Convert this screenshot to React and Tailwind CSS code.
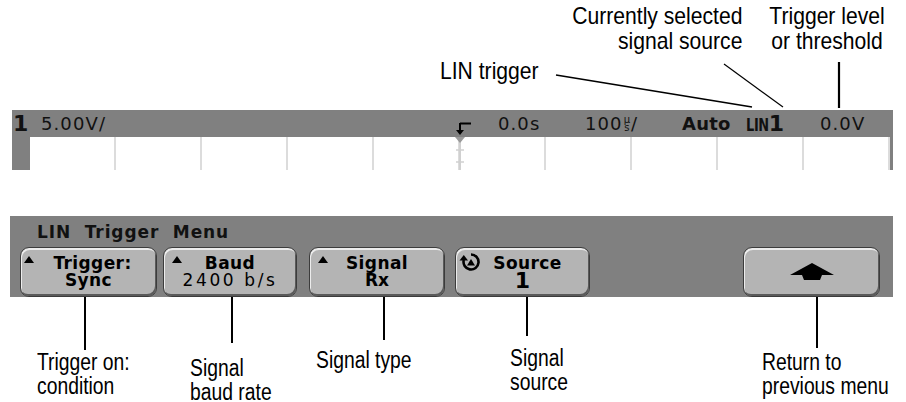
import React from 'react';

const scope = { fontFamily: '"DejaVu Sans", sans-serif' };
const note = { fontFamily: '"Liberation Sans", Arial, sans-serif' };

const Up = () => (
    <svg width="10" height="7" viewBox="0 0 10 7">
        <polygon points="5,0 10,7 0,7" fill="#000" />
    </svg>
);

const SoftKey = ({ className, left, top, bottom, topClass = '', bottomClass = '' }) => (
    <div className={`relative shrink-0 h-[50px] rounded-[9px] bg-[#b4b4b4] border border-[#3c3c3c] shadow-[inset_1px_2px_0_#ececec,inset_-1px_-2px_0_#5a5a5a] flex flex-col items-center justify-center text-black ${className}`}>
        {left && <div className="absolute left-[3px] top-[4px]">{left}</div>}
        <div className={`leading-[17px] ${topClass}`}>{top}</div>
        <div className={`leading-[17px] ${bottomClass}`}>{bottom}</div>
    </div>
);

const SourceIcon = () => (
    <svg width="24" height="20" viewBox="0 0 24 20">
        <path d="M12 2.5 A7.5 7.5 0 1 1 4.8 8" fill="none" stroke="#000" strokeWidth="2.6" />
        <polygon points="0.5,8.5 9,8.5 4.8,3" fill="#000" />
        <polygon points="12,7 16,13.5 8,13.5" fill="#000" />
    </svg>
);

export default function App() {
    return (
        <div className="w-[906px] h-[402px] bg-white overflow-hidden text-black">
            {/* Leyendas de arriba */}
            <div className="relative h-[110px]" style={note}>
                <div className="absolute right-[164px] top-[3px] text-right text-[24px] leading-[25px] scale-x-[0.88] origin-right whitespace-nowrap">
                    <div>Currently selected</div>
                    <div>signal source</div>
                </div>
                <div className="absolute left-[752px] top-[3px] w-[150px] text-center text-[24px] leading-[25px] scale-x-[0.88] origin-center whitespace-nowrap">
                    <div>Trigger level</div>
                    <div>or threshold</div>
                </div>
                <div className="absolute left-[440px] top-[58px] text-[24px] leading-[25px] scale-x-[0.88] origin-left whitespace-nowrap">LIN trigger</div>
                <svg className="absolute left-0 top-0" width="906" height="110">
                    <line x1="556" y1="75" x2="752" y2="107" stroke="#000" strokeWidth="1.6" />
                    <line x1="724" y1="64" x2="783" y2="107" stroke="#000" strokeWidth="1.2" />
                    <line x1="839" y1="62" x2="839" y2="108" stroke="#000" strokeWidth="2.2" />
                </svg>
            </div>

            {/* Pantalla: barra de estado + retícula */}
            <div className="ml-[12px] w-[881px] h-[60px] bg-[#808080]" style={scope}>
                <div className="flex items-center h-[27px] text-[18px] text-[#111] whitespace-nowrap">
                    <div className="shrink-0 ml-[1px] w-[18px] text-[22px] font-bold">1</div>
                    <div className="shrink-0 ml-[10px] w-[70px] tracking-[1.1px]">5.00V/</div>
                    <div className="shrink-0 ml-[344px] w-[17px] h-[27px] flex items-end pb-[1px]">
                        <svg width="17" height="14" viewBox="0 0 17 14">
                            <path d="M5 1.5 H16" stroke="#000" strokeWidth="2" />
                            <path d="M5 1 V9" stroke="#000" strokeWidth="2" />
                            <polygon points="1,8 9,8 5,13" fill="#000" />
                        </svg>
                    </div>
                    <div className="shrink-0 ml-[26px] w-[50px] tracking-[1.1px]">0.0s</div>
                    <div className="shrink-0 ml-[37px] w-[66px] tracking-[1.1px] flex items-center">
                        100
                        <span className="inline-flex flex-col items-center text-[10px] leading-[8px] tracking-normal mx-[1px]">
                            <span>µ</span>
                            <span>s</span>
                        </span>
                        /
                    </div>
                    <div className="shrink-0 ml-[31px] w-[50px] font-bold tracking-[0.2px]">Auto</div>
                    <div className="shrink-0 ml-[14px] w-[45px] font-bold flex items-baseline">
                        <span className="text-[18px] tracking-[-0.5px] scale-x-[0.72] origin-left inline-block">LIN</span>
                        <span className="text-[22px] -ml-[9px]">1</span>
                    </div>
                    <div className="shrink-0 ml-[29px] w-[50px] tracking-[1.1px]">0.0V</div>
                </div>
                <div className="relative ml-[18px] w-[860px] h-[33px] bg-white grid grid-cols-10 divide-x-2 divide-[#dcdcdc]">
                    {Array.from({ length: 10 }).map((_, i) => (
                        <div key={i} />
                    ))}
                    <svg className="absolute left-[420px] top-0" width="20" height="33">
                        <line x1="10" y1="0" x2="10" y2="33" stroke="#d0d0d0" strokeWidth="2" />
                        <line x1="6" y1="13" x2="14" y2="13" stroke="#d0d0d0" strokeWidth="1.5" />
                        <line x1="6" y1="25" x2="14" y2="25" stroke="#d0d0d0" strokeWidth="1.5" />
                        <polygon points="5,0 15,0 10,6" fill="#9a9a9a" />
                    </svg>
                </div>
            </div>

            {/* Menú de teclas */}
            <div className="ml-[10px] mt-[46px] w-[883px] h-[81px] bg-[#808080] flex flex-col" style={scope}>
                <div className="h-[31px] pl-[27px] pt-[4px] text-[17px] font-bold tracking-[0.9px] text-[#111] whitespace-pre">LIN  Trigger  Menu</div>
                <div className="flex pl-[10px] text-[17px]">
                    <SoftKey className="w-[137px]" left={<span className="pt-[4px] block"><Up /></span>} top="Trigger:" bottom="Sync" topClass="font-bold pl-[8px] tracking-[0.4px]" bottomClass="font-bold tracking-[0.4px]" />
                    <SoftKey className="ml-[6px] w-[134px]" left={<span className="pl-[5px] pt-[4px] block"><Up /></span>} top="Baud" bottom="2400 b/s" topClass="font-bold tracking-[0.4px]" bottomClass="tracking-[2.6px]" />
                    <SoftKey className="ml-[12px] w-[136px]" left={<span className="pl-[5px] pt-[4px] block"><Up /></span>} top="Signal" bottom="Rx" topClass="font-bold tracking-[0.4px]" bottomClass="font-bold" />
                    <SoftKey className="ml-[10px] w-[135px]" left={<SourceIcon />} top="Source" bottom="1" topClass="font-bold pl-[10px] tracking-[0.4px]" bottomClass="font-bold text-[22px]" />
                    <div className="ml-[153px] w-[137px] h-[50px] rounded-[9px] bg-[#b4b4b4] border border-[#3c3c3c] shadow-[inset_1px_2px_0_#ececec,inset_-1px_-2px_0_#5a5a5a] flex items-center justify-center">
                        <svg width="44" height="18" viewBox="0 0 44 18">
                            <polygon points="22,0 44,12 32,12 30,17 14,17 12,12 0,12" fill="#000" />
                        </svg>
                    </div>
                </div>
            </div>

            {/* Leyendas de abajo */}
            <div className="relative h-[105px]" style={note}>
                <svg className="absolute left-0 top-0" width="906" height="105">
                    <line x1="85" y1="0" x2="85" y2="53" stroke="#000" strokeWidth="2" />
                    <line x1="232" y1="0" x2="232" y2="46" stroke="#000" strokeWidth="2" />
                    <line x1="384" y1="0" x2="384" y2="43" stroke="#000" strokeWidth="2" />
                    <line x1="527" y1="0" x2="527" y2="39" stroke="#000" strokeWidth="2" />
                    <line x1="817" y1="0" x2="817" y2="51" stroke="#000" strokeWidth="2" />
                </svg>
                <div className="absolute left-[37px] top-[53px] text-[23px] leading-[24px] scale-x-[0.84] origin-left whitespace-nowrap">
                    <div>Trigger on:</div>
                    <div>condition</div>
                </div>
                <div className="absolute left-[190px] top-[59px] text-[23px] leading-[24px] scale-x-[0.84] origin-left whitespace-nowrap">
                    <div>Signal</div>
                    <div>baud rate</div>
                </div>
                <div className="absolute left-[316px] top-[51px] text-[23px] leading-[24px] scale-x-[0.84] origin-left whitespace-nowrap">Signal type</div>
                <div className="absolute left-[510px] top-[49px] text-[23px] leading-[24px] scale-x-[0.84] origin-left whitespace-nowrap">
                    <div>Signal</div>
                    <div>source</div>
                </div>
                <div className="absolute left-[762px] top-[53px] text-[23px] leading-[24px] scale-x-[0.84] origin-left whitespace-nowrap">
                    <div>Return to</div>
                    <div>previous menu</div>
                </div>
            </div>
        </div>
    );
}
